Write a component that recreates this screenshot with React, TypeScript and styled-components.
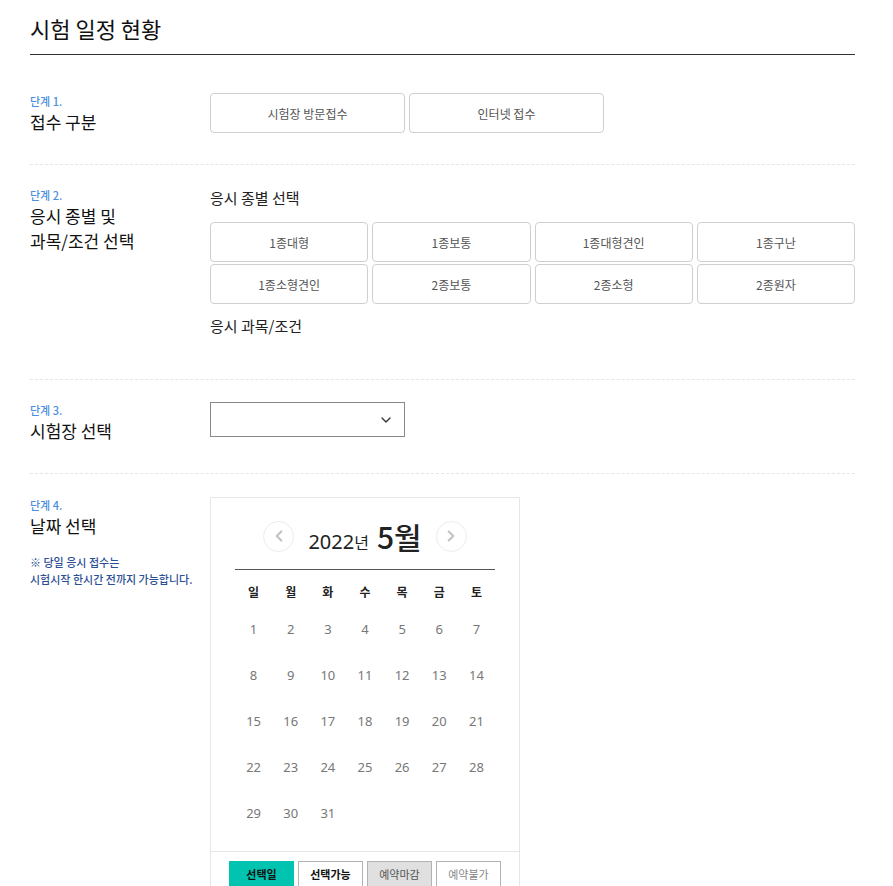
import React from 'react'
import styled, { createGlobalStyle } from 'styled-components'
import { ChevronDown, ChevronLeft, ChevronRight } from 'lucide-react'

const GlobalStyle = createGlobalStyle`
  body {
    margin: 0;
    background: #fff;
    font-family: "Noto Sans CJK KR", "Noto Sans", sans-serif;
    color: #111;
  }
  * { box-sizing: border-box; }
`

const Page = styled.div`
  width: 825px;
  margin-left: 30px;
`

const Header = styled.div`
  padding: 12px 0 9px;
  border-bottom: 1px solid #333;
  margin-bottom: 16px;
`

const Title = styled.h1`
  margin: 0;
  font-size: 22px;
  line-height: 33px;
  font-weight: 400;
  color: #111;
`

const Section = styled.section<{ last?: boolean; top?: number }>`
  display: grid;
  grid-template-columns: 180px 1fr;
  padding: ${p => p.top ?? 22}px 0 ${p => (p.last ? 0 : 30)}px;
  border-bottom: ${p => (p.last ? 'none' : '1px dashed #e6e6e6')};
`

const StepLabel = styled.div``

const StepNo = styled.div`
  font-size: 11px;
  line-height: 16px;
  color: #4b8fe0;
  font-weight: 500;
`

const StepTitle = styled.div`
  font-size: 17px;
  line-height: 25px;
  color: #111;
  font-weight: 400;
`

const Note = styled.p`
  margin: 16px 0 0;
  font-size: 11px;
  line-height: 17px;
  color: #2c4f95;
  font-weight: 500;
`

const Row = styled.div`
  display: flex;
  gap: 4px;
`

const OptionButton = styled.button<{ w?: number }>`
  width: ${p => (p.w ? `${p.w}px` : 'auto')};
  height: 40px;
  background: #fff;
  border: 1px solid #cfcfcf;
  border-radius: 4px;
  font-family: inherit;
  font-size: 12px;
  color: #555;
  cursor: pointer;
`

const SubTitle = styled.div<{ mt?: number }>`
  font-size: 15px;
  line-height: 22px;
  font-weight: 400;
  color: #222;
  margin-top: ${p => p.mt ?? 0}px;
`

const KindGrid = styled.div`
  display: grid;
  grid-template-columns: repeat(4, 1fr);
  gap: 2px 4px;
  margin-top: 13px;
`

const SubjectArea = styled.div`
  min-height: 12px;
`

const Select = styled.div`
  width: 195px;
  height: 35px;
  border: 1px solid #888;
  display: flex;
  align-items: center;
  justify-content: flex-end;
  padding-right: 10px;
  color: #333;
`

const Calendar = styled.div`
  width: 310px;
  border: 1px solid #e6e6e6;
`

const CalHead = styled.div`
  margin: 0 24px;
  padding: 20px 0 15px;
  border-bottom: 1px solid #555;
  display: flex;
  align-items: center;
  justify-content: center;
  gap: 14px;
`

const NavCircle = styled.span`
  width: 31px;
  height: 31px;
  border-radius: 50%;
  border: 1px solid #ececec;
  display: flex;
  align-items: center;
  justify-content: center;
  color: #c4c4c4;
`

const MonthLabel = styled.div`
  display: flex;
  align-items: baseline;
  color: #222;
  height: 36px;
`

const Year = styled.span`
  font-size: 20px;
  font-family: "Noto Sans", "Noto Sans CJK KR", sans-serif;
`

const YearUnit = styled.span`
  font-size: 16px;
  margin-right: 8px;
`

const Month = styled.span`
  font-size: 30px;
  font-weight: 500;
  line-height: 36px;
`

const DayGrid = styled.div`
  margin: 0 24px;
  display: grid;
  grid-template-columns: repeat(7, 1fr);
  grid-template-rows: 36px;
  grid-auto-rows: 46px;
  padding-bottom: 15px;
`

const WeekDay = styled.div`
  padding-top: 14px;
  font-size: 12px;
  line-height: 16px;
  font-weight: 700;
  text-align: center;
  color: #222;
`

const DayCell = styled.div`
  display: flex;
  align-items: center;
  justify-content: center;
  font-size: 13px;
  color: #777;
  font-family: "Noto Sans", "Noto Sans CJK KR", sans-serif;
`

const Legend = styled.div`
  border-top: 1px solid #e6e6e6;
  padding: 9px 0 0;
  display: flex;
  justify-content: center;
  gap: 4px;
`

const LegendItem = styled.span<{ kind: 'selected' | 'available' | 'closed' | 'disabled' }>`
  width: 65px;
  height: 26px;
  display: flex;
  align-items: center;
  justify-content: center;
  font-size: 11px;
  font-weight: ${p => (p.kind === 'selected' || p.kind === 'available' ? 700 : 400)};
  background: ${p => (p.kind === 'selected' ? '#00c4b0' : p.kind === 'closed' ? '#e0e0e0' : '#fff')};
  border: ${p => (p.kind === 'selected' ? '1px solid #00c4b0' : '1px solid #b3b3b3')};
  color: ${p => (p.kind === 'disabled' ? '#888' : p.kind === 'closed' ? '#555' : '#111')};
`

const kinds = ['1종대형', '1종보통', '1종대형견인', '1종구난', '1종소형견인', '2종보통', '2종소형', '2종원자']
const weekDays = ['일', '월', '화', '수', '목', '금', '토']
const days = Array.from({ length: 31 }, (_, i) => i + 1)

const App = () => {
  return (
    <>
      <GlobalStyle />
      <Page>
        <Header>
          <Title>시험 일정 현황</Title>
        </Header>

        <Section>
          <StepLabel>
            <StepNo>단계 1.</StepNo>
            <StepTitle>접수 구분</StepTitle>
          </StepLabel>
          <Row>
            <OptionButton w={195}>시험장 방문접수</OptionButton>
            <OptionButton w={195}>인터넷 접수</OptionButton>
          </Row>
        </Section>

        <Section>
          <StepLabel>
            <StepNo>단계 2.</StepNo>
            <StepTitle>
              응시 종별 및
              <br />
              과목/조건 선택
            </StepTitle>
          </StepLabel>
          <div>
            <SubTitle>응시 종별 선택</SubTitle>
            <KindGrid>
              {kinds.map(k => (
                <OptionButton key={k}>{k}</OptionButton>
              ))}
            </KindGrid>
            <SubTitle mt={11}>응시 과목/조건</SubTitle>
            <SubjectArea />
          </div>
        </Section>

        <Section>
          <StepLabel>
            <StepNo>단계 3.</StepNo>
            <StepTitle>시험장 선택</StepTitle>
          </StepLabel>
          <div>
            <Select>
              <ChevronDown size={16} strokeWidth={2} />
            </Select>
          </div>
        </Section>

        <Section last top={23}>
          <StepLabel>
            <StepNo>단계 4.</StepNo>
            <StepTitle>날짜 선택</StepTitle>
            <Note>
              ※ 당일 응시 접수는
              <br />
              시험시작 한시간 전까지 가능합니다.
            </Note>
          </StepLabel>
          <Calendar>
            <CalHead>
              <NavCircle>
                <ChevronLeft size={18} strokeWidth={3} />
              </NavCircle>
              <MonthLabel>
                <Year>2022</Year>
                <YearUnit>년</YearUnit>
                <Month>5월</Month>
              </MonthLabel>
              <NavCircle>
                <ChevronRight size={18} strokeWidth={3} />
              </NavCircle>
            </CalHead>
            <DayGrid>
              {weekDays.map(d => (
                <WeekDay key={d}>{d}</WeekDay>
              ))}
              {days.map(d => (
                <DayCell key={d}>{d}</DayCell>
              ))}
            </DayGrid>
            <Legend>
              <LegendItem kind="selected">선택일</LegendItem>
              <LegendItem kind="available">선택가능</LegendItem>
              <LegendItem kind="closed">예약마감</LegendItem>
              <LegendItem kind="disabled">예약불가</LegendItem>
            </Legend>
          </Calendar>
        </Section>
      </Page>
    </>
  )
}

export default App
